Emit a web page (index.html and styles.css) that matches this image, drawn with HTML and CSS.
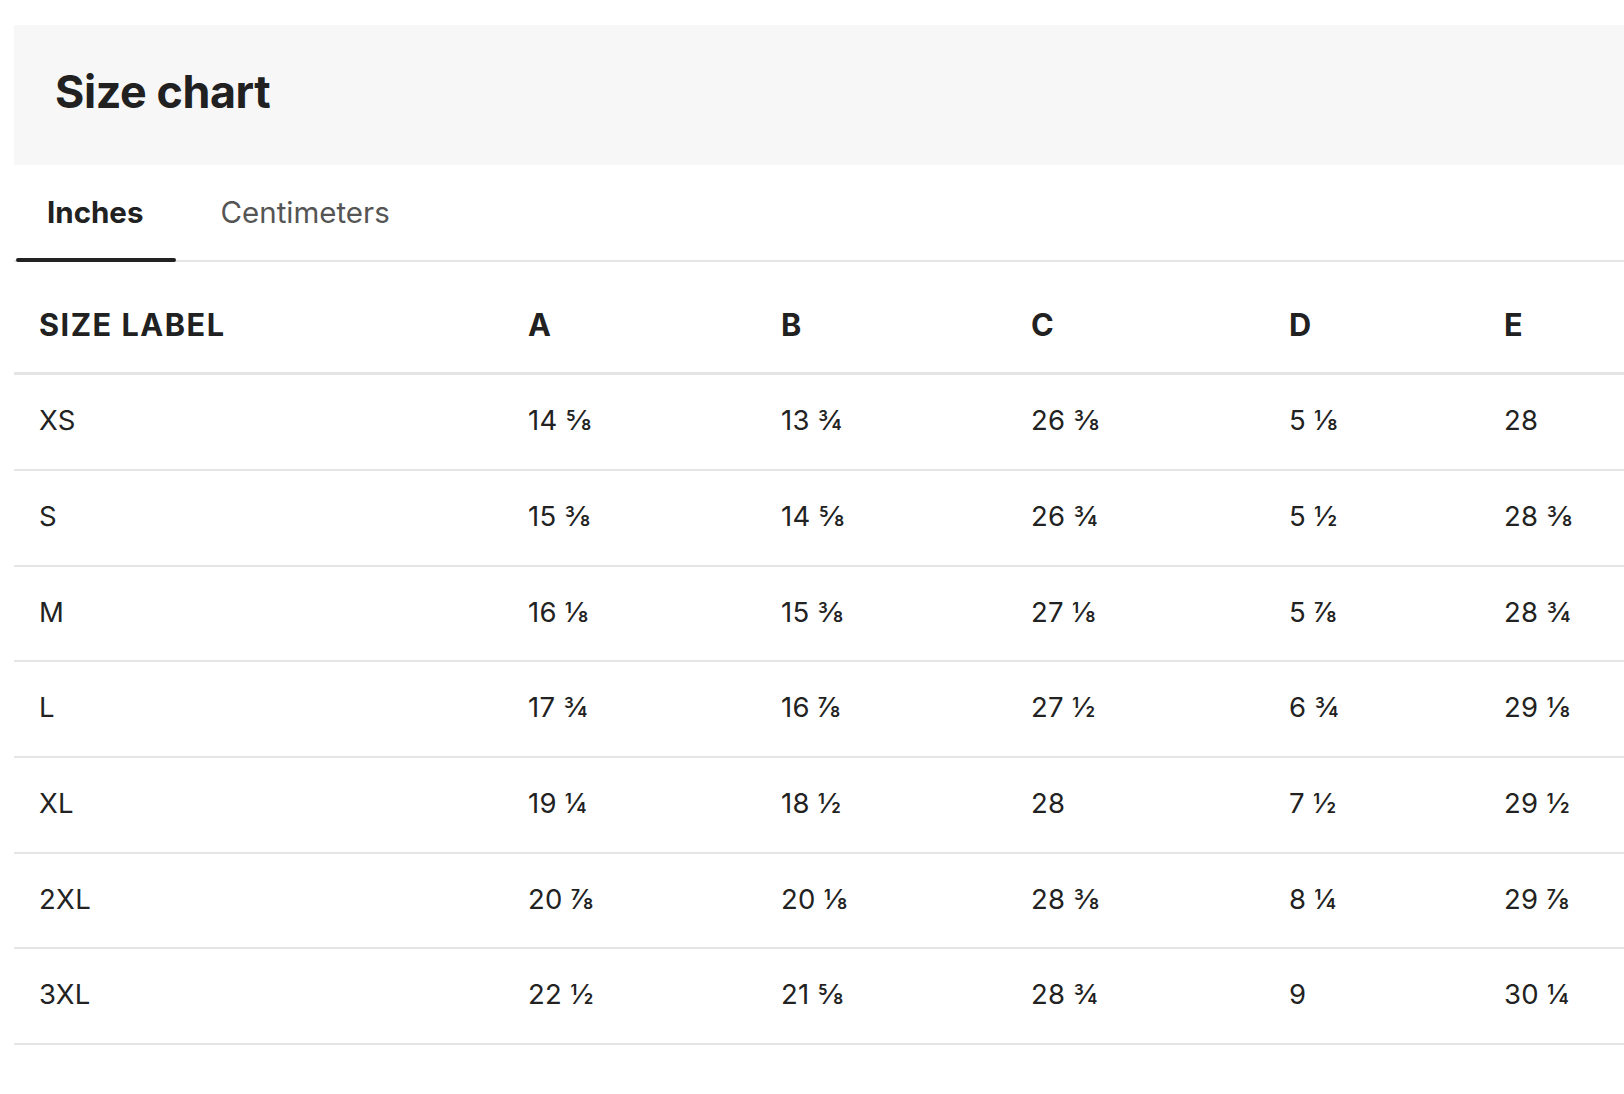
FILE: index.html
```html
<!DOCTYPE html>
<html lang="en">
<head>
<meta charset="utf-8">
<title>Size chart</title>
<link rel="stylesheet" href="styles.css">
</head>
<body>
<div class="page">
  <header class="chart-header">
    <h1 class="chart-title">Size chart</h1>
  </header>
  <nav class="tabs">
    <div class="tab tab-active">Inches</div>
    <div class="tab">Centimeters</div>
  </nav>
  <table class="size-table">
    <colgroup>
      <col class="col-label">
      <col class="col-a">
      <col class="col-b">
      <col class="col-c">
      <col class="col-d">
      <col class="col-e">
    </colgroup>
    <thead>
      <tr><th>SIZE LABEL</th><th>A</th><th>B</th><th>C</th><th>D</th><th>E</th></tr>
    </thead>
    <tbody>
      <tr><td>XS</td><td>14 ⅝</td><td>13 ¾</td><td>26 ⅜</td><td>5 ⅛</td><td>28</td></tr>
      <tr><td>S</td><td>15 ⅜</td><td>14 ⅝</td><td>26 ¾</td><td>5 ½</td><td>28 ⅜</td></tr>
      <tr><td>M</td><td>16 ⅛</td><td>15 ⅜</td><td>27 ⅛</td><td>5 ⅞</td><td>28 ¾</td></tr>
      <tr><td>L</td><td>17 ¾</td><td>16 ⅞</td><td>27 ½</td><td>6 ¾</td><td>29 ⅛</td></tr>
      <tr><td>XL</td><td>19 ¼</td><td>18 ½</td><td>28</td><td>7 ½</td><td>29 ½</td></tr>
      <tr><td>2XL</td><td>20 ⅞</td><td>20 ⅛</td><td>28 ⅜</td><td>8 ¼</td><td>29 ⅞</td></tr>
      <tr><td>3XL</td><td>22 ½</td><td>21 ⅝</td><td>28 ¾</td><td>9</td><td>30 ¼</td></tr>
    </tbody>
  </table>
</div>
</body>
</html>
```
FILE: styles.css
```css
html, body {
  margin: 0;
  padding: 0;
  background: #ffffff;
  overflow: hidden;
}

body {
  font-family: "Inter", "Lato", "Liberation Sans", sans-serif;
  color: #222222;
}

.page {
  padding: 25px 0 0 14px;
}

.chart-header {
  background: #f7f7f7;
  height: 140px;
  box-sizing: border-box;
  padding: 41px 0 0 41px;
}

.chart-title {
  margin: 0;
  font-size: 44.8px;
  line-height: 53.76px;
  font-weight: 700;
  letter-spacing: -0.4px;
  color: #212121;
}

.tabs {
  display: flex;
  gap: 11px;
  padding-top: 28.7px;
  border-bottom: 2px solid #e5e5e5;
}

.tab {
  position: relative;
  padding: 0 33px 29.9px;
  font-size: 29.5px;
  line-height: 36.36px;
  color: #555555;
}

.tab-active {
  font-weight: 700;
  color: #212121;
}

.tab-active::after {
  content: "";
  position: absolute;
  left: 2px;
  right: 0;
  bottom: -2px;
  height: 4px;
  border-radius: 2px;
  background: #222222;
}

.size-table {
  width: 1610px;
  table-layout: fixed;
  border-collapse: collapse;
}

.col-label { width: 489px; }
.col-a { width: 253px; }
.col-b { width: 250px; }
.col-c { width: 258px; }
.col-d { width: 215px; }
.col-e { width: 145px; }

.size-table th {
  text-align: left;
  font-size: 30.7px;
  line-height: 36.84px;
  font-weight: 700;
  letter-spacing: 1.5px;
  color: #212121;
  padding: 45.1px 0 28.4px 25px;
  border-bottom: 3px solid #e5e5e5;
}

.size-table td {
  text-align: left;
  font-size: 27.5px;
  line-height: 33px;
  letter-spacing: 0.3px;
  color: #222222;
  padding: 28.9px 0 31.8px 25px;
  border-bottom: 2px solid #e5e5e5;
}
```
